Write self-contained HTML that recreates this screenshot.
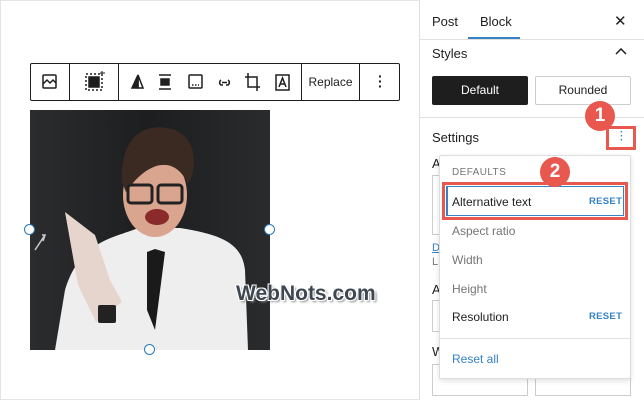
<!DOCTYPE html>
<html><head><style>
*{box-sizing:border-box;margin:0;padding:0}
body{width:644px;height:400px;overflow:hidden;background:#fff;font-family:"Liberation Sans",sans-serif;position:relative;color:#1e1e1e}
.a{position:absolute}
.t{font-size:13px}
</style></head><body>
<div class="a" style="left:0;top:0;width:420px;height:400px;border:1px solid #e4e4e4;border-right:none"></div>
<!-- toolbar -->
<div class="a" style="left:30px;top:63px;width:370px;height:38px;border:1px solid #1e1e1e;border-radius:2px"></div>
<div class="a" style="left:69px;top:63px;width:1px;height:38px;background:#1e1e1e"></div>
<div class="a" style="left:118px;top:63px;width:1px;height:38px;background:#1e1e1e"></div>
<div class="a" style="left:301px;top:63px;width:1px;height:38px;background:#1e1e1e"></div>
<div class="a" style="left:359px;top:63px;width:1px;height:38px;background:#1e1e1e"></div>
<svg class="a" style="left:30px;top:63px" width="370" height="38" fill="none" stroke="#1e1e1e" stroke-width="1.5">
<rect x="13" y="12" width="13" height="13" rx="1"/><path d="M13 21l4-4 3 3 3-3 3 3"/>
<rect x="59" y="14" width="10" height="10" fill="#1e1e1e"/><rect x="56" y="11" width="16" height="16" stroke-dasharray="2 2"/><path d="M72 8v5M70 10h5" stroke-width="1"/>
<path d="M108 12l-6 13h6z" fill="#1e1e1e"/><path d="M108 12l5 13h-5z"/>
<path d="M129 12h12M129 26h12"/><rect x="131" y="16" width="8" height="6" fill="#1e1e1e"/>
<rect x="159" y="12" width="13" height="13" rx="1"/><path d="M162 22h7" stroke-dasharray="1.5 1.5"/>
<path d="M191 17a3 3 0 0 0 0 5h2M198 17a3 3 0 0 1 0 5h-2M192 19.5h5"/>
<path d="M218 10v14h12M215 14h12v14"/>
<rect x="246" y="12" width="13" height="15"/><path d="M249 24l3.5-9 3.5 9M250 21h5"/>
</svg>
<div class="a t" style="left:302px;top:75px;width:57px;text-align:center;font-size:12px">Replace</div>
<div class="a" style="left:378px;top:74px;width:2px;line-height:5px;font-size:14px;font-weight:bold">·<br>·<br>·</div>
<!-- image -->
<svg class="a" style="left:30px;top:110px" width="240" height="240">
<defs><linearGradient id="g" x1="0" x2="1"><stop offset="0" stop-color="#2b2c2e"/><stop offset=".5" stop-color="#1d1e20"/><stop offset="1" stop-color="#2a2b2d"/></linearGradient></defs>
<rect width="240" height="240" fill="url(#g)"/>
<path d="M5 140l10-15M12 125l3 0 -2 6" stroke="#ccc" fill="none" stroke-width="1.5"/>
<path d="M25 240L35 180C50 130 85 128 108 118L150 118C195 125 212 135 215 160L218 240z" fill="#eeeeee"/>
<path d="M35 102L65 125 80 170 92 192 66 212 48 175z" fill="#e6d5cc"/>
<path d="M117 142l8-3 10 3-10 78-8-20z" fill="#1a1a1a"/>
<ellipse cx="125" cy="85" rx="32" ry="42" fill="#d9a58e"/>
<path d="M92 72C90 25 115 14 138 18 168 24 168 58 158 74 145 45 118 50 96 82z" fill="#3a2a22"/>
<rect x="98" y="75" width="24" height="18" rx="3" fill="none" stroke="#222" stroke-width="3"/><rect x="128" y="75" width="24" height="18" rx="3" fill="none" stroke="#222" stroke-width="3"/>
<ellipse cx="127" cy="107" rx="12" ry="8" fill="#8a2a2a"/>
<rect x="68" y="195" width="18" height="18" rx="2" fill="#222"/>
</svg>
<div class="a" style="left:24px;top:224px;width:11px;height:11px;border:1.5px solid #2a7ab8;border-radius:50%;background:#fff"></div>
<div class="a" style="left:264px;top:224px;width:11px;height:11px;border:1.5px solid #2a7ab8;border-radius:50%;background:#fff"></div>
<div class="a" style="left:144px;top:344px;width:11px;height:11px;border:1.5px solid #2a7ab8;border-radius:50%;background:#fff"></div>
<div class="a" style="left:236px;top:282px;font-size:21px;font-weight:bold;color:#3e4751;text-shadow:-1px -1px 0 #fff,1px -1px 0 #fff,-1px 1px 0 #fff,1px 1px 0 #fff,2px 2px 2px #888">WebNots.com</div>
<!-- sidebar -->
<div class="a" style="left:419px;top:0;width:1px;height:400px;background:#e0e0e0"></div>
<div class="a t" style="left:432px;top:14px">Post</div>
<div class="a t" style="left:480px;top:14px">Block</div>
<div class="a" style="left:468px;top:37px;width:52px;height:2px;background:#3582c4"></div>
<div class="a" style="left:420px;top:39px;width:224px;height:1px;background:#e0e0e0"></div>
<div class="a" style="left:614px;top:12px;font-size:15px">✕</div>
<div class="a t" style="left:432px;top:46px;font-weight:500">Styles</div>
<svg class="a" style="left:615px;top:48px" width="12" height="8"><path d="M1 6l5-5 5 5" stroke="#1e1e1e" stroke-width="1.5" fill="none"/></svg>
<div class="a" style="left:432px;top:76px;width:96px;height:29px;background:#1e1e1e;border-radius:2px;color:#fff;font-size:12px;text-align:center;line-height:29px">Default</div>
<div class="a" style="left:535px;top:76px;width:96px;height:29px;border:1px solid #ccc;border-radius:2px;font-size:12px;text-align:center;line-height:27px">Rounded</div>
<div class="a" style="left:420px;top:117px;width:224px;height:1px;background:#e0e0e0"></div>
<div class="a t" style="left:432px;top:130px">Settings</div>
<div class="a t" style="left:432px;top:156px">A</div>
<div class="a" style="left:432px;top:175px;width:10px;height:60px;border:1px solid #ccc"></div>
<div class="a" style="left:432px;top:242px;font-size:11px;color:#3582c4;text-decoration:underline">D</div>
<div class="a" style="left:432px;top:256px;font-size:11px;color:#777">L</div>
<div class="a t" style="left:432px;top:282px">A</div>
<div class="a" style="left:432px;top:300px;width:10px;height:32px;border:1px solid #ccc"></div>
<div class="a t" style="left:432px;top:344px">W</div>
<div class="a" style="left:432px;top:364px;width:96px;height:32px;border:1px solid #ccc"></div>
<div class="a" style="left:535px;top:364px;width:96px;height:32px;border:1px solid #ccc"></div>
<div class="a" style="left:606px;top:126px;width:30px;height:24px;border:3px solid #e8584f"></div>
<div class="a" style="left:620px;top:131px;width:2px;line-height:4px;font-size:10px;color:#3582c4;font-weight:bold">·<br>·<br>·</div>
<div class="a" style="left:585px;top:101px;width:30px;height:30px;border-radius:50%;background:#e8584f;color:#fff;font-weight:bold;font-size:19px;text-align:center;line-height:30px">1</div>
<!-- dropdown -->
<div class="a" style="left:439px;top:155px;width:192px;height:224px;background:#fff;border:1px solid #ddd;border-radius:2px;box-shadow:0 2px 6px rgba(0,0,0,.12)"></div>
<div class="a" style="left:452px;top:167px;font-size:10px;color:#757575;letter-spacing:.4px">DEFAULTS</div>
<div class="a" style="left:442px;top:182px;width:186px;height:38px;border:3px solid #e8584f"></div>
<div class="a" style="left:446px;top:186px;width:178px;height:30px;border:1px solid #3582c4;border-left-width:2px"></div>
<div class="a" style="left:452px;top:195px;font-size:12px">Alternative text</div>
<div class="a" style="left:589px;top:196px;font-size:9.5px;color:#3582c4;font-weight:bold;letter-spacing:.3px">RESET</div>
<div class="a" style="left:540px;top:157px;width:30px;height:30px;border-radius:50%;background:#e8584f;color:#fff;font-weight:bold;font-size:19px;text-align:center;line-height:30px">2</div>
<div class="a" style="left:452px;top:224px;font-size:12px;color:#757575">Aspect ratio</div>
<div class="a" style="left:452px;top:253px;font-size:12px;color:#757575">Width</div>
<div class="a" style="left:452px;top:282px;font-size:12px;color:#757575">Height</div>
<div class="a" style="left:452px;top:310px;font-size:12px">Resolution</div>
<div class="a" style="left:589px;top:311px;font-size:9.5px;color:#3582c4;font-weight:bold;letter-spacing:.3px">RESET</div>
<div class="a" style="left:440px;top:338px;width:190px;height:1px;background:#e0e0e0"></div>
<div class="a" style="left:452px;top:352px;font-size:12px;color:#3582c4">Reset all</div>
</body></html>
